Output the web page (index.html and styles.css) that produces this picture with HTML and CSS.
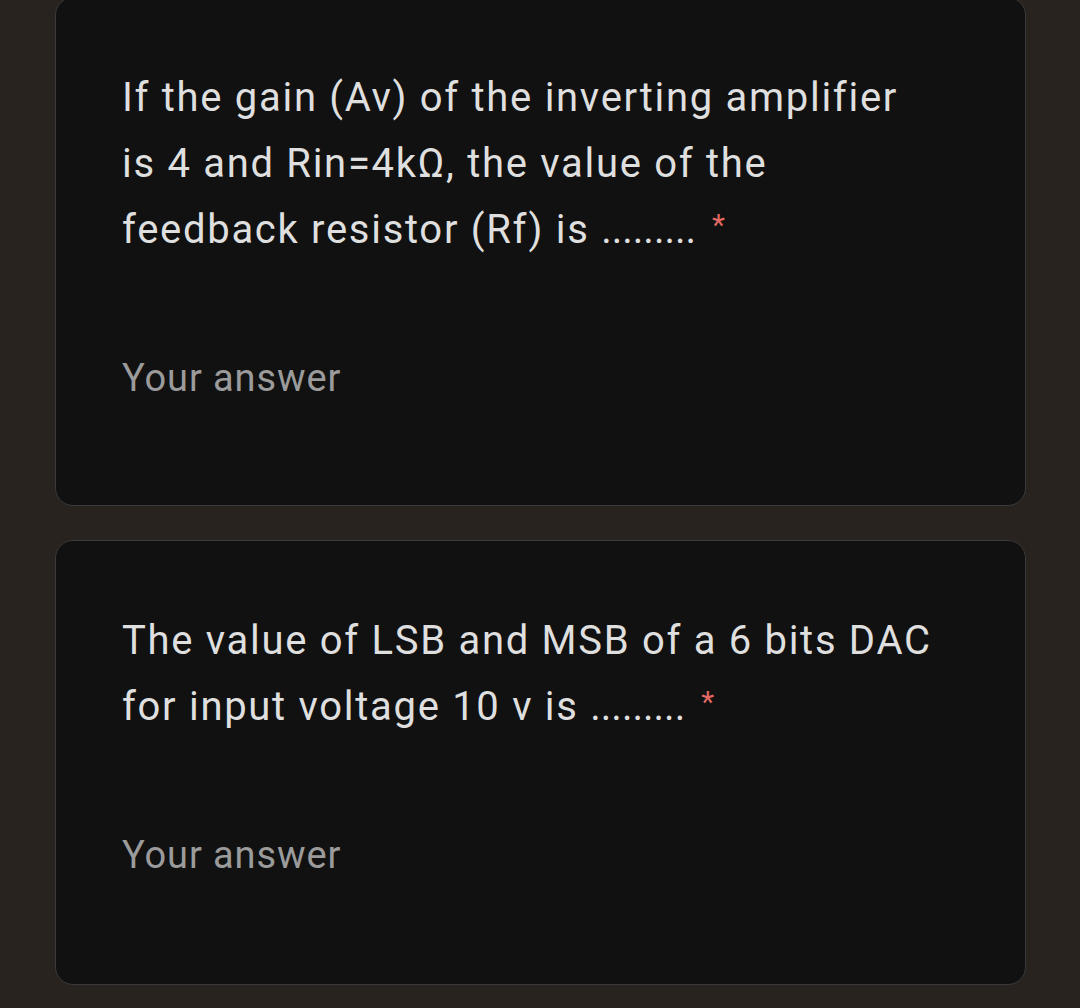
FILE: index.html
```html
<!DOCTYPE html>
<html>
<head>
<meta charset="utf-8">
<link rel="stylesheet" href="styles.css">
</head>
<body>
<div class="page">
  <div class="card first">
    <div class="question">If the gain (Av) of the inverting amplifier is 4 and Rin=4kΩ, the value of the feedback resistor (Rf) is <span class="dots">.........</span><span class="req">*</span></div>
    <div class="answer">Your answer</div>
  </div>
  <div class="card second">
    <div class="question">The value of LSB and MSB of a 6 bits DAC for input voltage 10 v is <span class="dots">.........</span><span class="req">*</span></div>
    <div class="answer">Your answer</div>
  </div>
</div>
</body>
</html>
```
FILE: styles.css
```css
html, body {
  margin: 0;
  padding: 0;
  background: #28231f;
  height: 100%;
  overflow: hidden;
}
.page {
  display: flex;
  flex-direction: column;
  gap: 34px;
  padding: 0 54px 0 55px;
  margin-top: -3px;
}
.card {
  background: #111111;
  border: 1.5px solid #3a3a3c;
  border-radius: 18px;
  padding: 67px 82px 0 66px;
  font-family: Roboto, "Noto Sans", sans-serif;
}
.first { height: 440px; }
.second { height: 376px; }
.question {
  color: #dfdfdf;
  font-size: 40px;
  line-height: 66px;
  letter-spacing: 1.7px;
}
.dots {
  letter-spacing: 0;
}
.req {
  color: #e46962;
  margin-left: 16px;
  font-size: 30px;
  line-height: 30px;
  vertical-align: 8px;
}
.answer {
  margin-top: 82px;
  color: #9b9b9b;
  font-size: 38px;
  letter-spacing: 0.9px;
  line-height: 66px;
}
```
